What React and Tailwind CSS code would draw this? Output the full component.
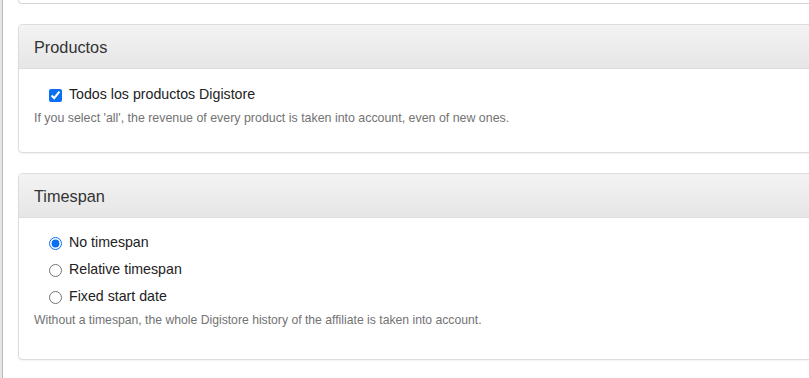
import { useState } from "react";

const Panel = ({ title, children, className = "" }) => (
  <section
    className={`w-[820px] bg-white border border-[#dddddd] rounded-[4px] shadow-[0_1px_2px_rgba(0,0,0,0.05)] ${className}`}
  >
    {/* Heading */}
    <div className="h-[44px] flex items-center px-[15px] pt-[1px] border-b border-[#dddddd] rounded-t-[3px] bg-linear-to-b from-[#f3f3f3] to-[#e6e6e6]">
      <h3 className="text-[16.3px] leading-[18px] text-[#333333]">{title}</h3>
    </div>
    {children}
  </section>
);

const App = () => {
  const [allProducts, setAllProducts] = useState(true);
  const [timespan, setTimespan] = useState("none");

  const options = [
    { value: "none", label: "No timespan" },
    { value: "relative", label: "Relative timespan" },
    { value: "fixed", label: "Fixed start date" },
  ];

  return (
    <div className="w-[809px] h-[378px] overflow-hidden bg-white flex font-['Liberation_Sans',Arial,sans-serif] text-[#333333]">
      {/* edge of the window beside */}
      <div className="w-[3px] shrink-0 bg-[#e6e6e6] border-r border-[#b9b9b9]" />

      <div className="flex-1 pl-[15px]">
        {/* end of the card above */}
        <div className="w-[820px] h-[4px] border border-t-0 border-[#d5d5d5] rounded-b-[4px] mb-[20px]" />

        <Panel title="Productos">
          <div className="pt-[16px] px-[15px] pb-[25px]">
            <label className="h-[20px] flex items-center gap-[7px] pl-[15px] text-[14.2px] text-[#222222]">
              <input
                type="checkbox"
                checked={allProducts}
                onChange={(e) => setAllProducts(e.target.checked)}
                className="w-[13px] h-[13px] m-0 accent-[#0b6ff2]"
              />
              <span>Todos los productos Digistore</span>
            </label>
            <p className="mt-[5px] text-[12.4px] leading-[17px] text-[#737373]">
              If you select 'all', the revenue of every product is taken into account, even of new ones.
            </p>
          </div>
        </Panel>

        <Panel title="Timespan" className="mt-[20px]">
          <div className="pt-[15px] px-[15px] pb-[30px]">
            <div className="flex flex-col gap-[7px]">
              {options.map(({ value, label }) => (
                <label
                  key={value}
                  className="h-[20px] flex items-center gap-[7px] pl-[15px] text-[14.2px] text-[#222222]"
                >
                  <input
                    type="radio"
                    name="timespan"
                    checked={timespan === value}
                    onChange={() => setTimespan(value)}
                    className="w-[13px] h-[13px] m-0 accent-[#0b6ff2]"
                  />
                  <span>{label}</span>
                </label>
              ))}
            </div>
            <p className="mt-[5px] text-[12.2px] leading-[17px] text-[#737373]">
              Without a timespan, the whole Digistore history of the affiliate is taken into account.
            </p>
          </div>
        </Panel>
      </div>
    </div>
  );
};

export default App;
